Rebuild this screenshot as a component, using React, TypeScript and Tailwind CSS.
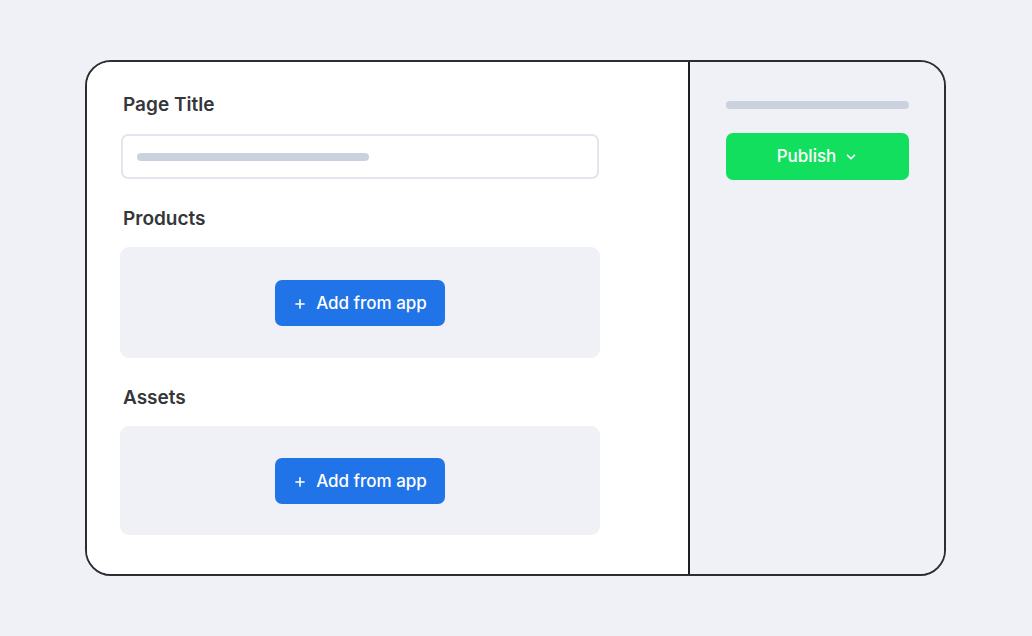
import { ChevronDown, Plus } from "lucide-react";

function AddButton() {
  return (
    <button className="h-[46px] w-[170px] pt-[2px] rounded-[7px] bg-[#2173e8] text-white text-[17px] font-medium flex items-center justify-center gap-[9px]">
      <Plus size={14} strokeWidth={2.75} />
      <span>Add from app</span>
    </button>
  );
}

export default function App() {
  return (
    <div className="min-h-screen bg-[#f0f1f6] pt-[60px] pl-[85px] font-['Inter',sans-serif]">
      <div className="w-[861px] h-[516px] border-2 border-[#2b2d32] rounded-[26px] overflow-hidden flex">
        <div className="w-[603px] bg-white border-r-2 border-[#1e1f23] pl-[33px] pt-[31px]">
          <h2 className="pl-[3px] text-[19px] leading-6 font-semibold text-[#35363a]">Page Title</h2>
          <div className="mt-[17px] ml-px w-[478px] h-[45px] rounded-[7px] border-2 border-[#e2e5ed] flex items-center pl-[14px]">
            <div className="w-[232px] h-[8px] rounded-full bg-[#cbd2de]" />
          </div>
          <h2 className="mt-[28px] pl-[3px] text-[19px] leading-6 font-semibold text-[#35363a]">Products</h2>
          <div className="mt-[16px] w-[480px] h-[111px] rounded-[9px] bg-[#f0f1f6] flex items-center justify-center">
            <AddButton />
          </div>
          <h2 className="mt-[28px] pl-[3px] text-[19px] leading-6 font-semibold text-[#35363a]">Assets</h2>
          <div className="mt-[16px] w-[480px] h-[109px] rounded-[9px] bg-[#f0f1f6] flex items-center justify-center">
            <AddButton />
          </div>
        </div>
        <div className="flex-1 bg-[#f0f1f6] pl-[36px] pt-[39px]">
          <div className="w-[183px] h-[8px] rounded-full bg-[#cbd2de]" />
          <button className="mt-[24px] w-[183px] h-[47px] pt-[1px] rounded-[7px] bg-[#13df5f] text-white text-[17px] font-medium flex items-center justify-center gap-[8px]">
            <span>Publish</span>
            <ChevronDown size={14} strokeWidth={3} />
          </button>
        </div>
      </div>
    </div>
  );
}
